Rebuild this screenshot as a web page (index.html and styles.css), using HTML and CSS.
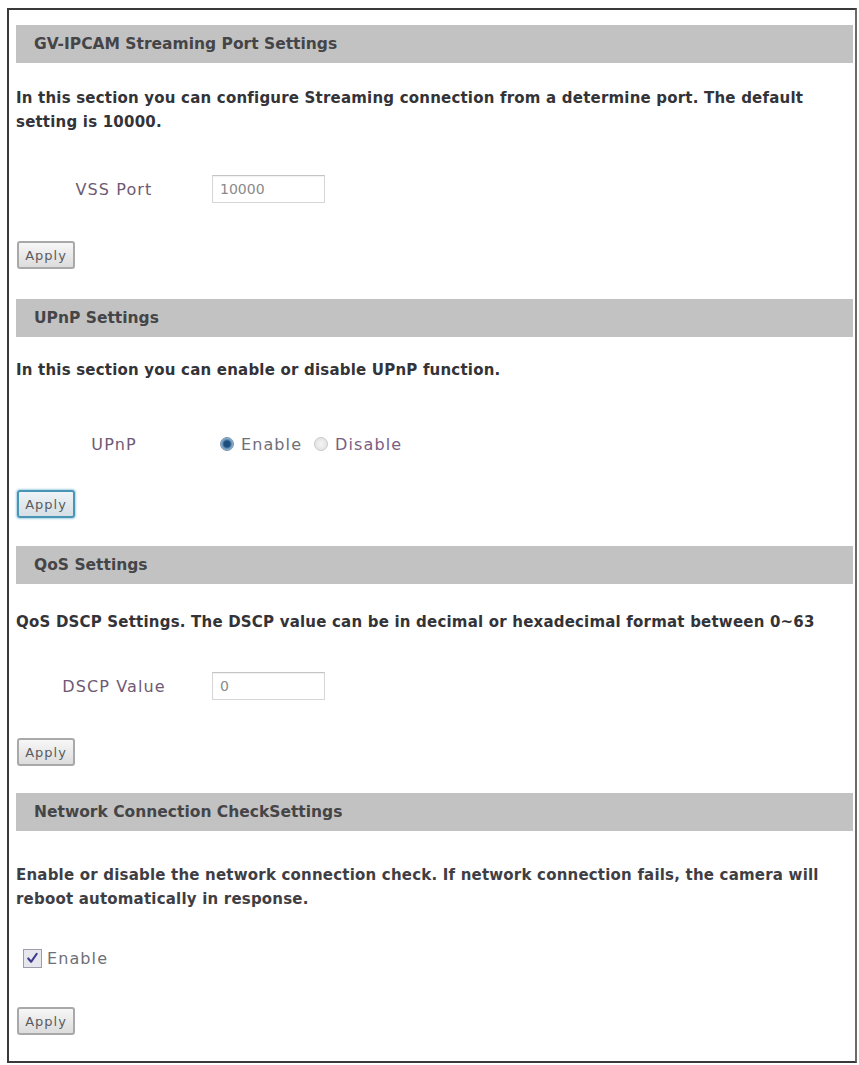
FILE: index.html
```html
<!DOCTYPE html>
<html lang="en">
<head>
<meta charset="utf-8">
<title>Network Settings</title>
<link rel="stylesheet" href="styles.css">
</head>
<body>
<div class="frame">
  <section class="sec sec-port">
    <h2 class="bar">GV-IPCAM Streaming Port Settings</h2>
    <p class="desc">In this section you can configure Streaming connection from a determine port. The default<br>setting is 10000.</p>
    <div class="row">
      <span class="label">VSS Port</span>
      <span class="field"><span class="textbox">10000</span></span>
    </div>
    <div class="actions"><button class="btn" type="button">Apply</button></div>
  </section>

  <section class="sec sec-upnp">
    <h2 class="bar">UPnP Settings</h2>
    <p class="desc">In this section you can enable or disable UPnP function.</p>
    <div class="row">
      <span class="label">UPnP</span>
      <span class="field options">
        <span class="opt"><span class="radio on"></span><span class="opt-text">Enable</span></span>
        <span class="opt"><span class="radio"></span><span class="opt-text alt">Disable</span></span>
      </span>
    </div>
    <div class="actions"><button class="btn focus" type="button">Apply</button></div>
  </section>

  <section class="sec sec-qos">
    <h2 class="bar">QoS Settings</h2>
    <p class="desc">QoS DSCP Settings. The DSCP value can be in decimal or hexadecimal format between 0~63</p>
    <div class="row">
      <span class="label">DSCP Value</span>
      <span class="field"><span class="textbox">0</span></span>
    </div>
    <div class="actions"><button class="btn" type="button">Apply</button></div>
  </section>

  <section class="sec sec-check">
    <h2 class="bar">Network Connection CheckSettings</h2>
    <p class="desc soft">Enable or disable the network connection check. If network connection fails, the camera will<br>reboot automatically in response.</p>
    <div class="row check-row">
      <span class="checkbox"><svg viewBox="0 0 18 18" width="18" height="18"><path d="M4.5 9.5 L7.5 13 L13.5 4.5" fill="none" stroke="#3b3a8c" stroke-width="2.2" stroke-linecap="round" stroke-linejoin="round"/></svg></span>
      <span class="opt-text">Enable</span>
    </div>
    <div class="actions"><button class="btn" type="button">Apply</button></div>
  </section>
</div>
</body>
</html>
```

FILE: styles.css
```css
* { box-sizing: border-box; }

html, body {
  margin: 0;
  padding: 0;
  background: #ffffff;
}

body {
  font-family: "DejaVu Sans", Verdana, sans-serif;
  color: #2e2e33;
}

.frame {
  width: 850px;
  height: 1055px;
  margin: 8px 0 0 7px;
  border: 2px solid #3a3a3a;
  border-right-color: #6a6a6a;
  padding: 15px 2px 0 7px;
  display: flex;
  flex-direction: column;
}

.sec {
  display: flex;
  flex-direction: column;
  align-items: flex-start;
  --gap-desc: 23px;
  --gap-row: 41px;
  --gap-btn: 38px;
  --gap-top: 0px;
  margin-top: var(--gap-top);
}

.sec-port  { --gap-desc: 23px; --gap-row: 41px; --gap-btn: 38px; }
.sec-upnp  { --gap-top: 30px; --gap-desc: 21px; --gap-row: 48px; --gap-btn: 32px; }
.sec-qos   { --gap-top: 28px; --gap-desc: 26px; --gap-row: 38px; --gap-btn: 38px; }
.sec-check { --gap-top: 27px; --gap-desc: 32px; --gap-row: 33px; --gap-btn: 35px; }

.bar {
  align-self: stretch;
  margin: 0;
  height: 38px;
  line-height: 38px;
  padding-left: 18px;
  background: #c2c2c2;
  font-size: 15.5px;
  font-weight: bold;
  color: #454548;
  white-space: nowrap;
}

.desc {
  margin: var(--gap-desc) 0 0 0;
  font-size: 15px;
  font-weight: bold;
  letter-spacing: 0.2px;
  line-height: 24px;
  color: #333338;
  white-space: nowrap;
}

.desc.soft {
  color: #3e3e44;
  letter-spacing: 0.2px;
}

.row {
  margin-top: var(--gap-row);
  height: 28px;
  display: flex;
  align-items: center;
}

.label {
  width: 196px;
  text-align: center;
  font-size: 16px;
  letter-spacing: 1.1px;
  color: #6e5a74;
}

.field {
  display: flex;
  align-items: center;
}

.textbox {
  width: 113px;
  height: 28px;
  border: 1px solid #d6d6d6;
  border-top-color: #c4c4c4;
  box-shadow: inset 0 1px 1px rgba(0,0,0,0.06);
  background: #fff;
  padding: 0 7px;
  font-size: 14px;
  line-height: 26px;
  color: #8a8a8a;
}

.options {
  padding-left: 8px;
  gap: 12px;
}

.opt {
  display: flex;
  align-items: center;
  gap: 7px;
}

.radio {
  width: 14px;
  height: 14px;
  border-radius: 50%;
  border: 1px solid #c9c9c9;
  background: radial-gradient(circle at 50% 50%, #f4f4f4 0, #dedede 100%);
}

.radio.on {
  border-color: #7d93a8;
  background: radial-gradient(circle at 50% 50%, #1e4e7c 0, #1e4e7c 3px, #5f8fb8 4.5px, #b9cfe2 7px);
}

.opt-text {
  font-size: 16px;
  letter-spacing: 1.1px;
  color: #6f6f76;
}

.opt-text.alt {
  color: #7a5e82;
}

.check-row {
  padding-left: 7px;
  gap: 5px;
}

.checkbox {
  width: 19px;
  height: 19px;
  border: 1px solid #9c9cab;
  background: #e6e6ef;
  display: flex;
  align-items: center;
  justify-content: center;
}

.checkbox svg {
  display: block;
}

.actions {
  margin-top: var(--gap-btn);
  padding-left: 1px;
}

.btn {
  display: block;
  width: 58px;
  height: 28px;
  margin: 0;
  padding: 0;
  border: 2px solid #a9a9a9;
  border-radius: 3px;
  background: linear-gradient(#f7f7f7, #dcdcdc);
  font-family: "DejaVu Sans", Verdana, sans-serif;
  font-size: 13px;
  letter-spacing: 1px;
  color: #5a5a60;
}

.btn.focus {
  border-color: #4a95b6;
  box-shadow: 0 0 2px 1px #a8d3e4;
  background: linear-gradient(#eef3f6, #d5dfe4);
}
```
